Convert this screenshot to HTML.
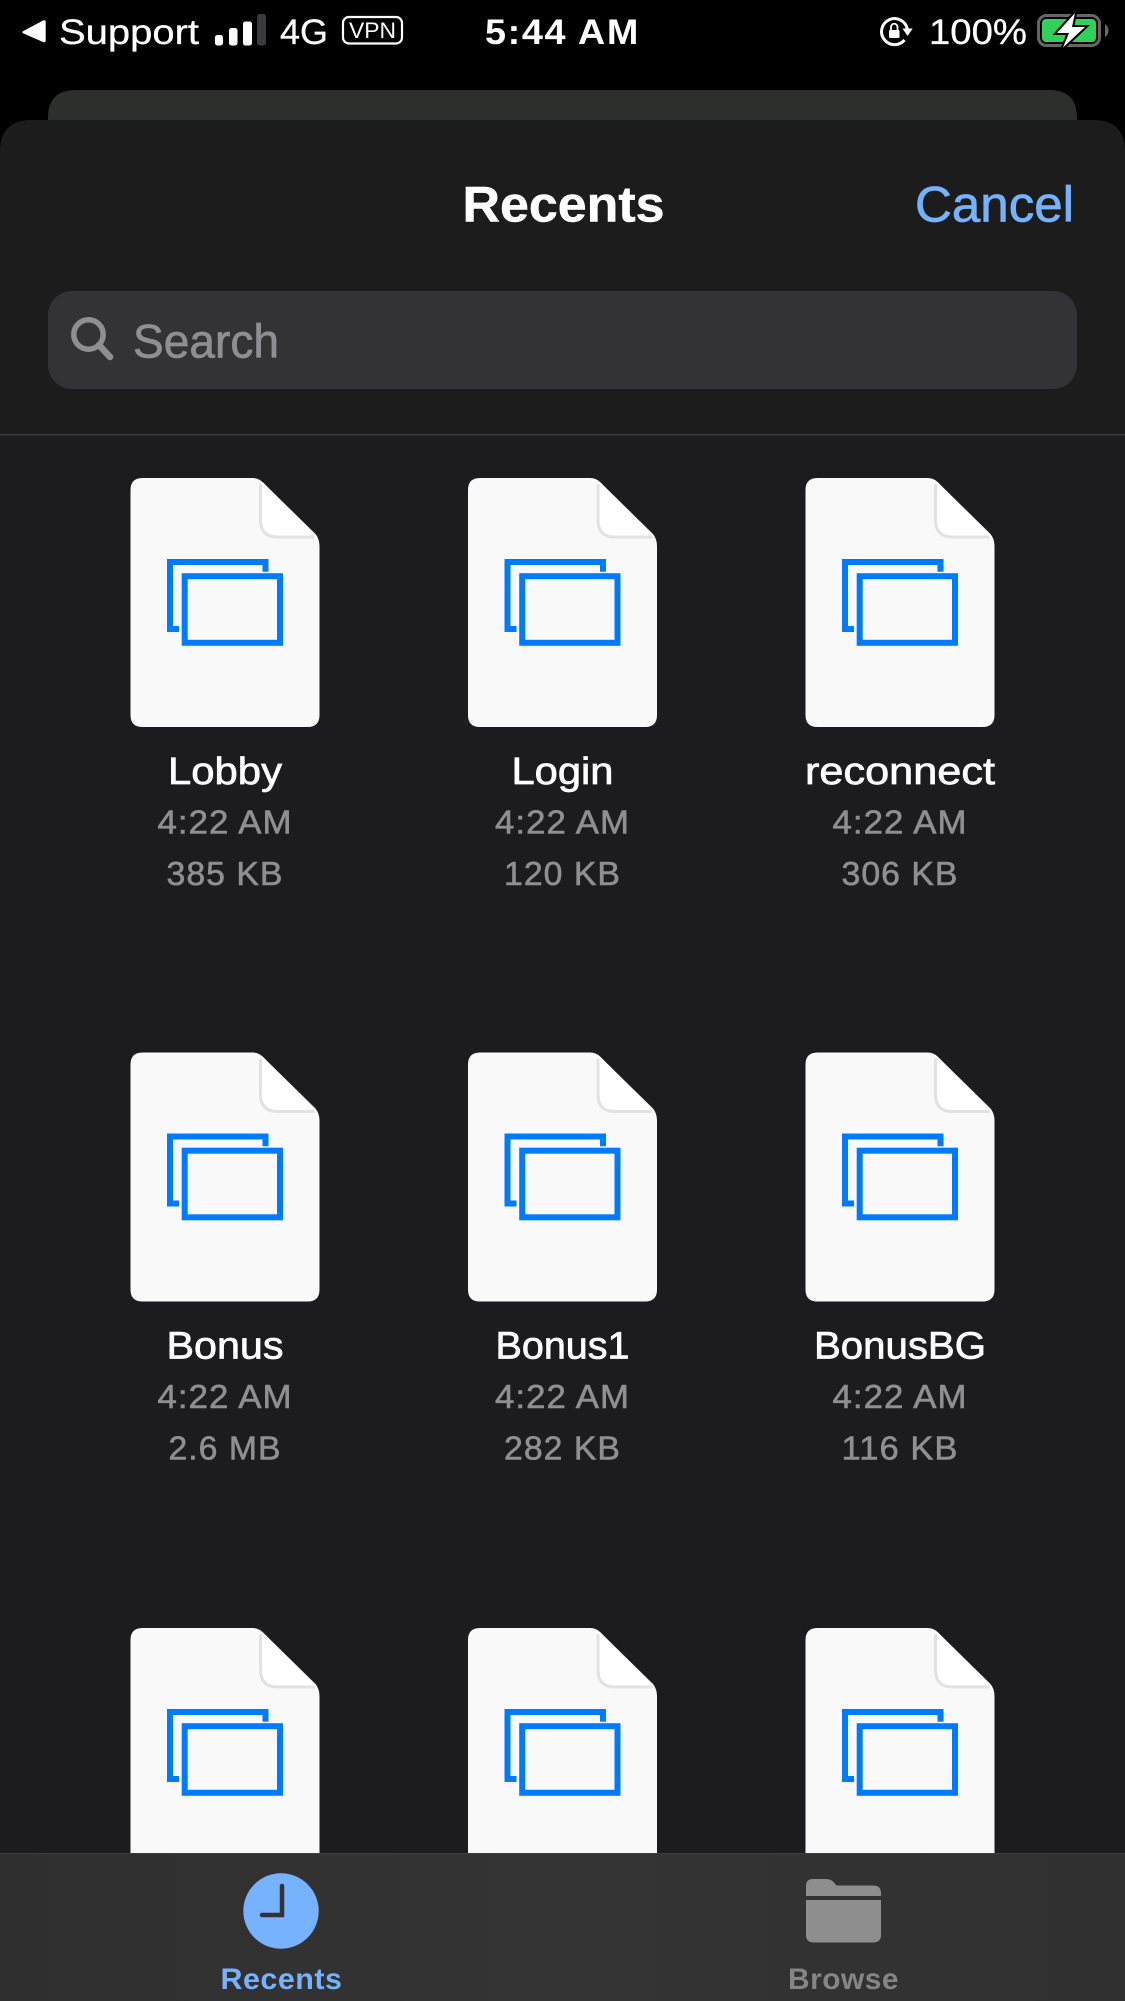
<!DOCTYPE html>
<html><head><meta charset="utf-8"><style>
html,body{margin:0;padding:0;background:#000;width:1125px;height:2001px;overflow:hidden}
svg{display:block}
text{font-family:"Liberation Sans",sans-serif}
.n{font-size:38px;fill:#fff;stroke:#fff;stroke-width:.7px;text-anchor:middle}
.s{font-size:33px;fill:#8e8e93;stroke:#8e8e93;stroke-width:.6px;text-anchor:middle;letter-spacing:1px}
.st{font-size:35px;fill:#fff;stroke:#fff;stroke-width:.3px}
</style></head><body>
<svg width="1125" height="2001" viewBox="0 0 1125 2001" xmlns="http://www.w3.org/2000/svg">
<defs>
<linearGradient id="tab" x1="0" x2="1" y1="0" y2="0"><stop offset="0" stop-color="#2f2f2f"/><stop offset=".5" stop-color="#343434"/><stop offset="1" stop-color="#303030"/></linearGradient>
<symbol id="doc" width="189" height="249" viewBox="0 0 189 249" overflow="visible">
<path d="M12 0H122Q128 0 132 4L185 56Q189 61 189 68V237Q189 249 177 249H12Q0 249 0 237V12Q0 0 12 0Z" fill="#f9f9f9"/>
<path d="M130 6V42Q130 59 147 59H186L132 4Z" fill="#fff"/>
<path d="M130 6V42Q130 59 147 59H184" fill="none" stroke="#e2e2e2" stroke-width="3"/>
<path d="M48.500 151H39.500V84H135V93.700" fill="none" stroke="#007aff" stroke-width="6"/>
<rect x="54.200" y="98.200" width="95.300" height="66.600" fill="none" stroke="#007aff" stroke-width="6"/>
</symbol>
</defs>
<rect width="1125" height="2001" fill="#000"/>
<!-- status bar -->
<path d="M22.500 31.500 43 20.500Q45.700 19.500 45.700 22V40.500Q45.700 43 43 42L22.500 33Z" fill="#fff"/>
<text class="st" x="59" y="44" textLength="140" lengthAdjust="spacingAndGlyphs">Support</text>
<rect x="215" y="35" width="8" height="10.500" rx="2.500" fill="#fff"/>
<rect x="229" y="28" width="8.500" height="17.500" rx="2.500" fill="#fff"/>
<rect x="243" y="21.500" width="9" height="24" rx="2.500" fill="#fff"/>
<rect x="257" y="14" width="9" height="31.500" rx="2.500" fill="#3a3a3c"/>
<text class="st" x="280" y="44" textLength="48" lengthAdjust="spacingAndGlyphs">4G</text>
<rect x="343" y="17" width="59" height="26.500" rx="6" fill="none" stroke="#fff" stroke-width="2.200"/>
<text x="372.500" y="38" font-size="22" fill="#fff" text-anchor="middle" textLength="47" lengthAdjust="spacingAndGlyphs">VPN</text>
<text x="485" y="44" font-size="35" font-weight="700" fill="#fff" letter-spacing="1.500" textLength="155" lengthAdjust="spacingAndGlyphs">5:44 AM</text>
<!-- rotation lock -->
<path d="M904.500 40A13 13 0 1 1 907.300 29" fill="none" stroke="#fff" stroke-width="3"/>
<path d="M902.500 28.500H912.700L907.600 36Z" fill="#fff"/>
<rect x="889" y="30" width="10.500" height="8" rx="1.200" fill="#fff"/>
<path d="M891 30.500V27A3.200 3.200 0 0 1 897.500 27V30.500" fill="none" stroke="#fff" stroke-width="1.800"/>
<text class="st" x="929" y="44" textLength="98" lengthAdjust="spacingAndGlyphs">100%</text>
<!-- battery -->
<rect x="1038.500" y="15.500" width="61" height="30" rx="8" fill="none" stroke="#666" stroke-width="3"/>
<rect x="1042" y="19" width="54" height="23" rx="4" fill="#30d158"/>
<path d="M1105 24Q1108.500 26 1108.500 30.500Q1108.500 35 1105 37Z" fill="#666"/>
<path d="M1075 13 1057 33H1069L1063 47.500 1085 27H1072Z" fill="#fff" stroke="#000" stroke-width="4" paint-order="stroke"/>
<!-- back card -->
<path d="M48 122V118Q48 90 76 90H1049Q1077 90 1077 118V122Z" fill="#2c302d"/>
<!-- sheet -->
<path d="M0 2001V152Q0 120 32 120H1093Q1125 120 1125 152V2001Z" fill="#1c1c1e"/>
<path d="M0 434V152Q0 120 32 120H1093Q1125 120 1125 152V434Z" fill="#1c1c1c"/>
<text x="462.500" y="221.500" font-size="50" font-weight="700" fill="#fff" stroke="#fff" stroke-width=".5" textLength="202" lengthAdjust="spacingAndGlyphs">Recents</text>
<text x="915" y="221.500" font-size="50" fill="#75b2fc" stroke="#75b2fc" stroke-width=".7" textLength="159" lengthAdjust="spacingAndGlyphs">Cancel</text>
<rect x="48" y="291" width="1029" height="98" rx="24" fill="#333336"/>
<circle cx="88.500" cy="334.500" r="14.700" fill="none" stroke="#8e8e93" stroke-width="5.500"/>
<path d="M99 345 110 357" stroke="#8e8e93" stroke-width="6.500" stroke-linecap="round"/>
<text x="133" y="357.500" font-size="47" fill="#8e8e93" stroke="#8e8e93" stroke-width=".7" textLength="146" lengthAdjust="spacingAndGlyphs">Search</text>
<rect x="0" y="434" width="1125" height="1.500" fill="#3c3c3e"/>
<!-- docs -->
<use href="#doc" x="130.500" y="478"/><use href="#doc" x="468" y="478"/><use href="#doc" x="805.500" y="478"/>
<use href="#doc" x="130.500" y="1052.500"/><use href="#doc" x="468" y="1052.500"/><use href="#doc" x="805.500" y="1052.500"/>
<use href="#doc" x="130.500" y="1628"/><use href="#doc" x="468" y="1628"/><use href="#doc" x="805.500" y="1628"/>
<!-- labels row 1 -->
<text class="n" x="225" y="784" textLength="114" lengthAdjust="spacingAndGlyphs">Lobby</text>
<text class="n" x="562.500" y="784" textLength="102" lengthAdjust="spacingAndGlyphs">Login</text>
<text class="n" x="900" y="784" textLength="190" lengthAdjust="spacingAndGlyphs">reconnect</text>
<text class="s" x="225" y="833.500" textLength="135" lengthAdjust="spacingAndGlyphs">4:22 AM</text>
<text class="s" x="562.500" y="833.500" textLength="135" lengthAdjust="spacingAndGlyphs">4:22 AM</text>
<text class="s" x="900" y="833.500" textLength="135" lengthAdjust="spacingAndGlyphs">4:22 AM</text>
<text class="s" x="225" y="885" textLength="117" lengthAdjust="spacingAndGlyphs">385 KB</text>
<text class="s" x="562.500" y="885" textLength="117" lengthAdjust="spacingAndGlyphs">120 KB</text>
<text class="s" x="900" y="885" textLength="117" lengthAdjust="spacingAndGlyphs">306 KB</text>
<!-- labels row 2 -->
<text class="n" x="225" y="1358.500" textLength="117" lengthAdjust="spacingAndGlyphs">Bonus</text>
<text class="n" x="562.500" y="1358.500" textLength="134" lengthAdjust="spacingAndGlyphs">Bonus1</text>
<text class="n" x="900" y="1358.500" textLength="172" lengthAdjust="spacingAndGlyphs">BonusBG</text>
<text class="s" x="225" y="1408" textLength="135" lengthAdjust="spacingAndGlyphs">4:22 AM</text>
<text class="s" x="562.500" y="1408" textLength="135" lengthAdjust="spacingAndGlyphs">4:22 AM</text>
<text class="s" x="900" y="1408" textLength="135" lengthAdjust="spacingAndGlyphs">4:22 AM</text>
<text class="s" x="225" y="1459.500" textLength="113" lengthAdjust="spacingAndGlyphs">2.6 MB</text>
<text class="s" x="562.500" y="1459.500" textLength="117" lengthAdjust="spacingAndGlyphs">282 KB</text>
<text class="s" x="900" y="1459.500" textLength="117" lengthAdjust="spacingAndGlyphs">116 KB</text>
<!-- tab bar -->
<rect x="0" y="1853" width="1125" height="148" fill="url(#tab)"/>
<rect x="0" y="1853" width="1125" height="1" fill="#3e3e3e"/>
<circle cx="281" cy="1911" r="37.700" fill="#76b2ff"/>
<path d="M282 1886V1915H262" fill="none" stroke="#323232" stroke-width="4.500" stroke-linecap="round" stroke-linejoin="miter"/>
<text x="220.500" y="1989" font-size="30" font-weight="700" fill="#76b2ff" letter-spacing=".5" textLength="122" lengthAdjust="spacingAndGlyphs">Recents</text>
<path d="M806 1896V1886Q806 1879 813 1879H826Q831 1879 833.500 1882L836.500 1885.500H873Q881 1885.500 881 1893V1896Z" fill="#8e8e8e"/>
<path d="M806 1900H881V1935Q881 1942.500 873 1942.500H814Q806 1942.500 806 1935Z" fill="#8e8e8e"/>
<text x="788" y="1989" font-size="30" font-weight="700" fill="#858585" letter-spacing=".5" textLength="111" lengthAdjust="spacingAndGlyphs">Browse</text>
</svg>
</body></html>
